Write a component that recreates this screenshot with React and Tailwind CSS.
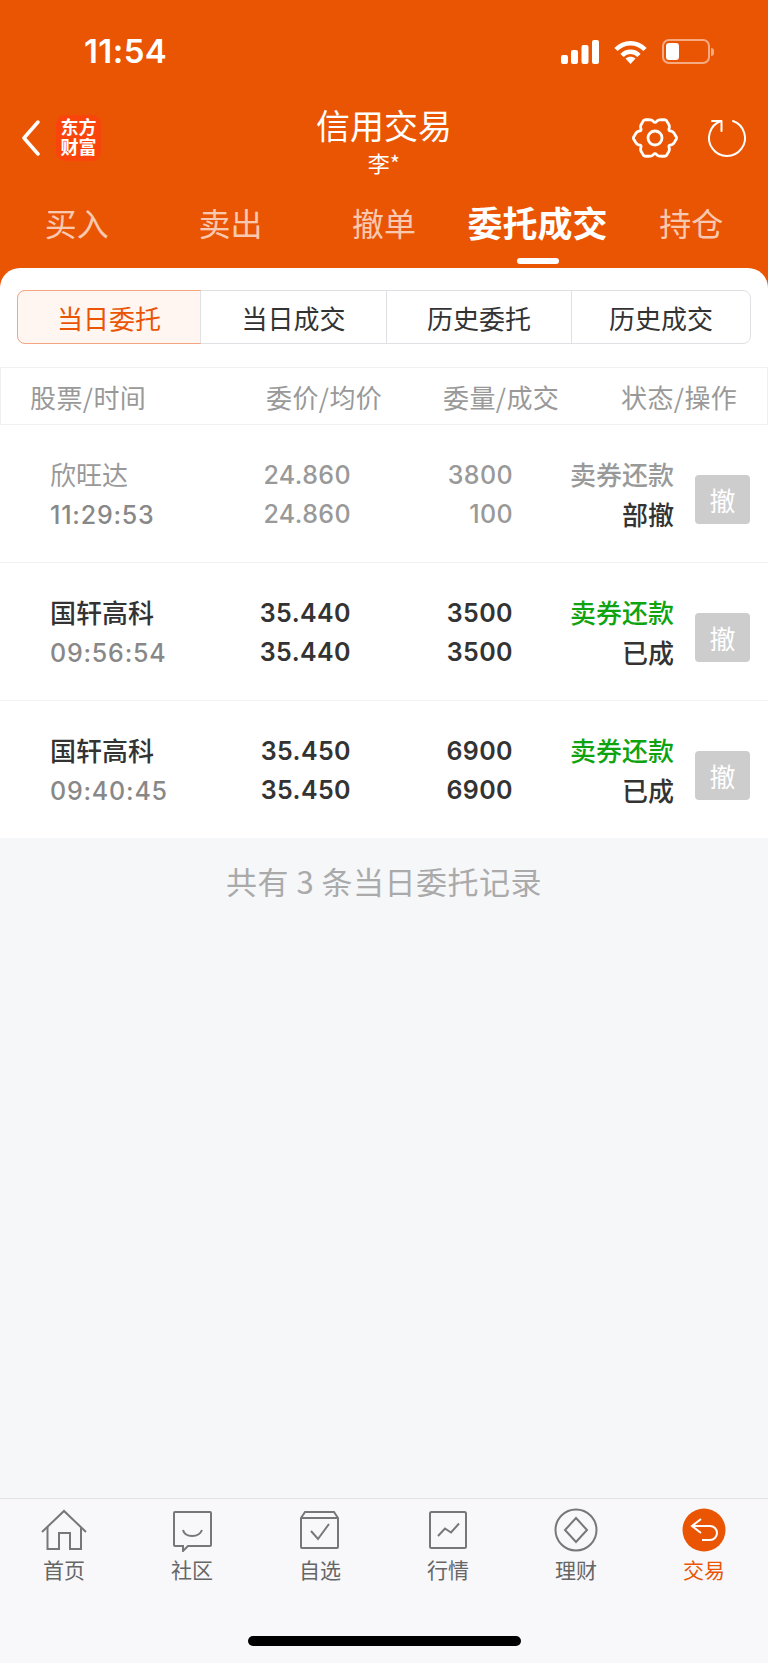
import React from 'react';

const TABS = ['买入', '卖出', '撤单', '委托成交', '持仓'];
const FILTERS = ['当日委托', '当日成交', '历史委托', '历史成交'];

const ORDERS = [
  { name: '欣旺达', time: '11:29:53', price: '24.860', avg: '24.860', qty: '3800', done: '100', side: '卖券还款', status: '部撤', muted: true },
  { name: '国轩高科', time: '09:56:54', price: '35.440', avg: '35.440', qty: '3500', done: '3500', side: '卖券还款', status: '已成' },
  { name: '国轩高科', time: '09:40:45', price: '35.450', avg: '35.450', qty: '6900', done: '6900', side: '卖券还款', status: '已成' },
];

// rounded hexagon outline with a small notch in the middle of each side
function gearPath() {
  const pts = [];
  const step = Math.PI / 3;
  for (let i = 0; i < 180; i++) {
    const a = (i / 180) * Math.PI * 2;
    const hex = 19 / Math.cos((a % step) - step / 2);
    const r = Math.min(hex, 21.5) - 2.8 * Math.pow((1 - Math.cos(6 * a)) / 2, 6);
    pts.push(`${(23 + r * Math.cos(a)).toFixed(2)} ${(21 + r * 0.96 * Math.sin(a)).toFixed(2)}`);
  }
  return 'M' + pts.join('L') + 'Z';
}

function StatusBar() {
  return (
    <div className="flex h-[100px] items-start justify-between pl-[84px] pr-[52px] pt-[34px] text-white">
      <span className="font-['Inter',sans-serif] text-[33px] leading-[34px] font-semibold tracking-[0.4px]">11:54</span>
      <div className="flex items-center gap-[15px] pt-[5px] pr-[2px]">
        <svg width="38" height="24" viewBox="0 0 38 24" fill="white">
          <rect x="0" y="15" width="7" height="9" rx="2" />
          <rect x="10" y="10" width="7" height="14" rx="2" />
          <rect x="20.500" y="5" width="7" height="19" rx="2" />
          <rect x="31" y="0" width="7" height="24" rx="2" />
        </svg>
        <svg width="33" height="24" viewBox="0 0 33 24" fill="none" stroke="white" strokeWidth="4.500">
          <path d="M2 9.500C10 1 23 1 31 9.500" />
          <path d="M8 15.500C12.500 10.500 20.500 10.500 25 15.500" />
          <path d="M16.500 24L11.500 18.500C14.500 16 18.500 16 21.500 18.500Z" fill="white" stroke="none" />
        </svg>
        <div className="flex items-center gap-[1px]">
          <div className="flex h-[25px] w-[48px] rounded-[7px] border-2 border-white/50 p-[2px]">
            <div className="w-[13px] rounded-[3px] bg-white" />
          </div>
          <div className="h-[8px] w-[3px] rounded-r-full bg-white/50" />
        </div>
      </div>
    </div>
  );
}

function NavBar() {
  return (
    <div className="grid h-[76px] grid-cols-[1fr_auto_1fr] items-center">
      <div className="flex items-center gap-[16px] pl-[22px]">
        <svg width="18" height="36" viewBox="0 0 18 36" fill="none" stroke="white" strokeWidth="3.500" strokeLinecap="round" strokeLinejoin="round">
          <path d="M16 2L2 18L16 34" />
        </svg>
        <div className="flex h-[46px] w-[45px] flex-col items-center justify-center rounded-[9px] bg-[#f9450c] font-['Liberation_Serif','Noto_Sans_CJK_SC',serif] text-[18px] leading-[20px] font-bold text-white">
          <span>东方</span>
          <span>财富</span>
        </div>
      </div>
      <div className="flex flex-col items-center self-start pt-[6px] text-white">
        <span className="text-[34px] leading-[38px]">信用交易</span>
        <span className="mt-[5px] text-[22px] leading-[26px]">李*</span>
      </div>
      <div className="flex items-center justify-end gap-[28px] pr-[20px]">
        <svg width="46" height="42" viewBox="0 0 46 42" fill="none" stroke="white" strokeWidth="2.800">
          <path d={gearPath()} strokeLinejoin="round" />
          <circle cx="23" cy="21" r="7" />
        </svg>
        <svg width="42" height="40" viewBox="0 0 42 40" fill="none" stroke="white" strokeWidth="2" strokeLinecap="round" strokeLinejoin="round">
          <path d="M15 3A18 18 0 1 0 27 3" />
          <path d="M6 3H15.500V13" />
        </svg>
      </div>
    </div>
  );
}

function TradeTabs() {
  return (
    <div className="flex h-[92px] items-start pt-[22px]">
      {TABS.map((tab) => {
        const active = tab === '委托成交';
        return (
          <div key={tab} className="relative flex h-[70px] flex-1 justify-center">
            <span className={active ? 'text-[35px] leading-[48px] font-bold whitespace-nowrap text-white' : 'text-[32px] leading-[48px] text-white/70'}>
              {tab}
            </span>
            {active && <div className="absolute top-[60px] h-[6px] w-[42px] rounded-full bg-white" />}
          </div>
        );
      })}
    </div>
  );
}

function FilterTabs() {
  return (
    <div className="mx-[17px] mt-[22px] flex h-[54px] rounded-[8px] border border-[#dfe0e4] text-[26px] text-[#333]">
      <div className="-m-px flex w-[184px] items-center justify-center rounded-l-[8px] border border-[#f4a683] bg-[#fff6f2] text-[#ea5504]">
        {FILTERS[0]}
      </div>
      <div className="flex w-[186px] items-center justify-center border-l border-[#dfe0e4]">{FILTERS[1]}</div>
      <div className="flex w-[185px] items-center justify-center border-l border-[#dfe0e4]">{FILTERS[2]}</div>
      <div className="flex flex-1 items-center justify-center border-l border-[#dfe0e4]">{FILTERS[3]}</div>
    </div>
  );
}

function TableHead() {
  return (
    <div className="mt-[23px] flex h-[58px] items-center gap-[60px] border border-[#f0f0f0] pl-[29px] text-[26px] tracking-[0.4px] whitespace-nowrap text-[#999]">
      <span className="w-[176px]">股票/时间</span>
      <span className="w-[117px]">委价/均价</span>
      <span className="w-[118px]">委量/成交</span>
      <span>状态/操作</span>
    </div>
  );
}

function OrderRow({ order, last }) {
  const { muted } = order;
  const main = muted ? 'text-[#999]' : 'text-[#333]';
  const digits = muted ? 'font-medium' : 'font-semibold';
  return (
    <div className={`flex items-center pl-[50px] pr-[18px] text-[26px] leading-[39.500px] ${last ? 'h-[137px]' : 'h-[138px] border-b border-[#f2f2f2]'}`}>
      <div className="flex w-[180px] flex-col pt-[2px]">
        <span className={`${main} ${muted ? '' : 'font-medium'}`}>{order.name}</span>
        <span className="pt-[2px] font-['Inter',sans-serif] text-[25px] font-medium tracking-[0.8px] text-[#888]">{order.time}</span>
      </div>
      <div className={`flex w-[121px] flex-col pt-[3px] text-right font-['Inter',sans-serif] text-[25px] tracking-[0.4px] ${digits} ${main}`}>
        <span>{order.price}</span>
        <span>{order.avg}</span>
      </div>
      <div className={`flex w-[162px] flex-col pt-[3px] text-right font-['Inter',sans-serif] text-[25px] tracking-[0.4px] ${digits} ${main}`}>
        <span>{order.qty}</span>
        <span>{order.done}</span>
      </div>
      <div className="flex w-[161px] flex-col text-right font-medium">
        <span className={muted ? 'text-[#999]' : 'text-[#0fa30f]'}>{order.side}</span>
        <span className="text-[#333]">{order.status}</span>
      </div>
      <button className="mt-[12px] ml-auto h-[49px] w-[55px] rounded-[4px] bg-[#cdcdcd] text-[26px] text-white">撤</button>
    </div>
  );
}

function NavIcon({ name }) {
  const stroke = { fill: 'none', stroke: '#777', strokeWidth: 2 };
  if (name === '首页') {
    return (
      <svg width="48" height="44" viewBox="0 0 48 44" {...stroke}>
        <path d="M2 24L24 3L46 24" />
        <path d="M7.500 19V41H19V25H30V41H41V19" />
      </svg>
    );
  }
  if (name === '社区') {
    return (
      <svg width="48" height="44" viewBox="0 0 48 44" {...stroke}>
        <path d="M7 4H42A1 1 0 0 1 43 5V37A1 1 0 0 1 42 38H20L15 43V38H7A1 1 0 0 1 6 37V5A1 1 0 0 1 7 4Z" />
        <path d="M15 22C17 30 31 30 34 22" />
      </svg>
    );
  }
  if (name === '自选') {
    return (
      <svg width="48" height="44" viewBox="0 0 48 44" {...stroke}>
        <path d="M5 10L9 4H38L42 10V39A1 1 0 0 1 41 40H6A1 1 0 0 1 5 39Z" />
        <path d="M5 10H42" />
        <path d="M15 23L22 31L33 16" />
      </svg>
    );
  }
  if (name === '行情') {
    return (
      <svg width="48" height="44" viewBox="0 0 48 44" {...stroke}>
        <rect x="6" y="4" width="36" height="36" rx="1.500" />
        <path d="M14 28L21 20.500L27 24.500L35 15.500" />
      </svg>
    );
  }
  if (name === '理财') {
    return (
      <svg width="48" height="44" viewBox="0 0 48 44" {...stroke}>
        <circle cx="24" cy="22" r="20.500" />
        <path d="M24 10L35 22L24 34L13 22Z" />
      </svg>
    );
  }
  return (
    <svg width="48" height="44" viewBox="0 0 48 44">
      <circle cx="24" cy="22" r="21.500" fill="#ea5504" />
      <path d="M21 11L12 18L21 25M12 18H30A7 7 0 0 1 30 32H22" fill="none" stroke="white" strokeWidth="2" />
    </svg>
  );
}

function BottomNav() {
  const items = ['首页', '社区', '自选', '行情', '理财', '交易'];
  return (
    <div className="flex h-[165px] flex-col border-t border-[#e2e2e4] bg-[#f8f8fb]">
      <div className="flex pt-[9px]">
        {items.map((item) => (
          <div key={item} className="flex flex-1 flex-col items-center">
            <NavIcon name={item} />
            <span className={`mt-[2px] text-[21px] leading-[30px] ${item === '交易' ? 'text-[#ea5504]' : 'text-[#666]'}`}>{item}</span>
          </div>
        ))}
      </div>
      <div className="mx-auto mt-[52px] h-[10px] w-[273px] rounded-full bg-black" />
    </div>
  );
}

export default function App() {
  return (
    <div className="flex h-[1663px] w-[768px] flex-col overflow-hidden bg-[#ea5504] font-['Noto_Sans_CJK_SC',sans-serif]">
      <StatusBar />
      <NavBar />
      <TradeTabs />
      <div className="flex flex-1 flex-col overflow-hidden rounded-t-[20px] bg-white">
        <FilterTabs />
        <TableHead />
        {ORDERS.map((order, i) => (
          <OrderRow key={i} order={order} last={i === ORDERS.length - 1} />
        ))}
        <div className="flex-1 bg-[#f6f7f9] pt-[23px] text-center text-[31px] leading-[40px] tracking-[0.500px] text-[#aaa]">
          共有 3 条当日委托记录
        </div>
        <BottomNav />
      </div>
    </div>
  );
}
